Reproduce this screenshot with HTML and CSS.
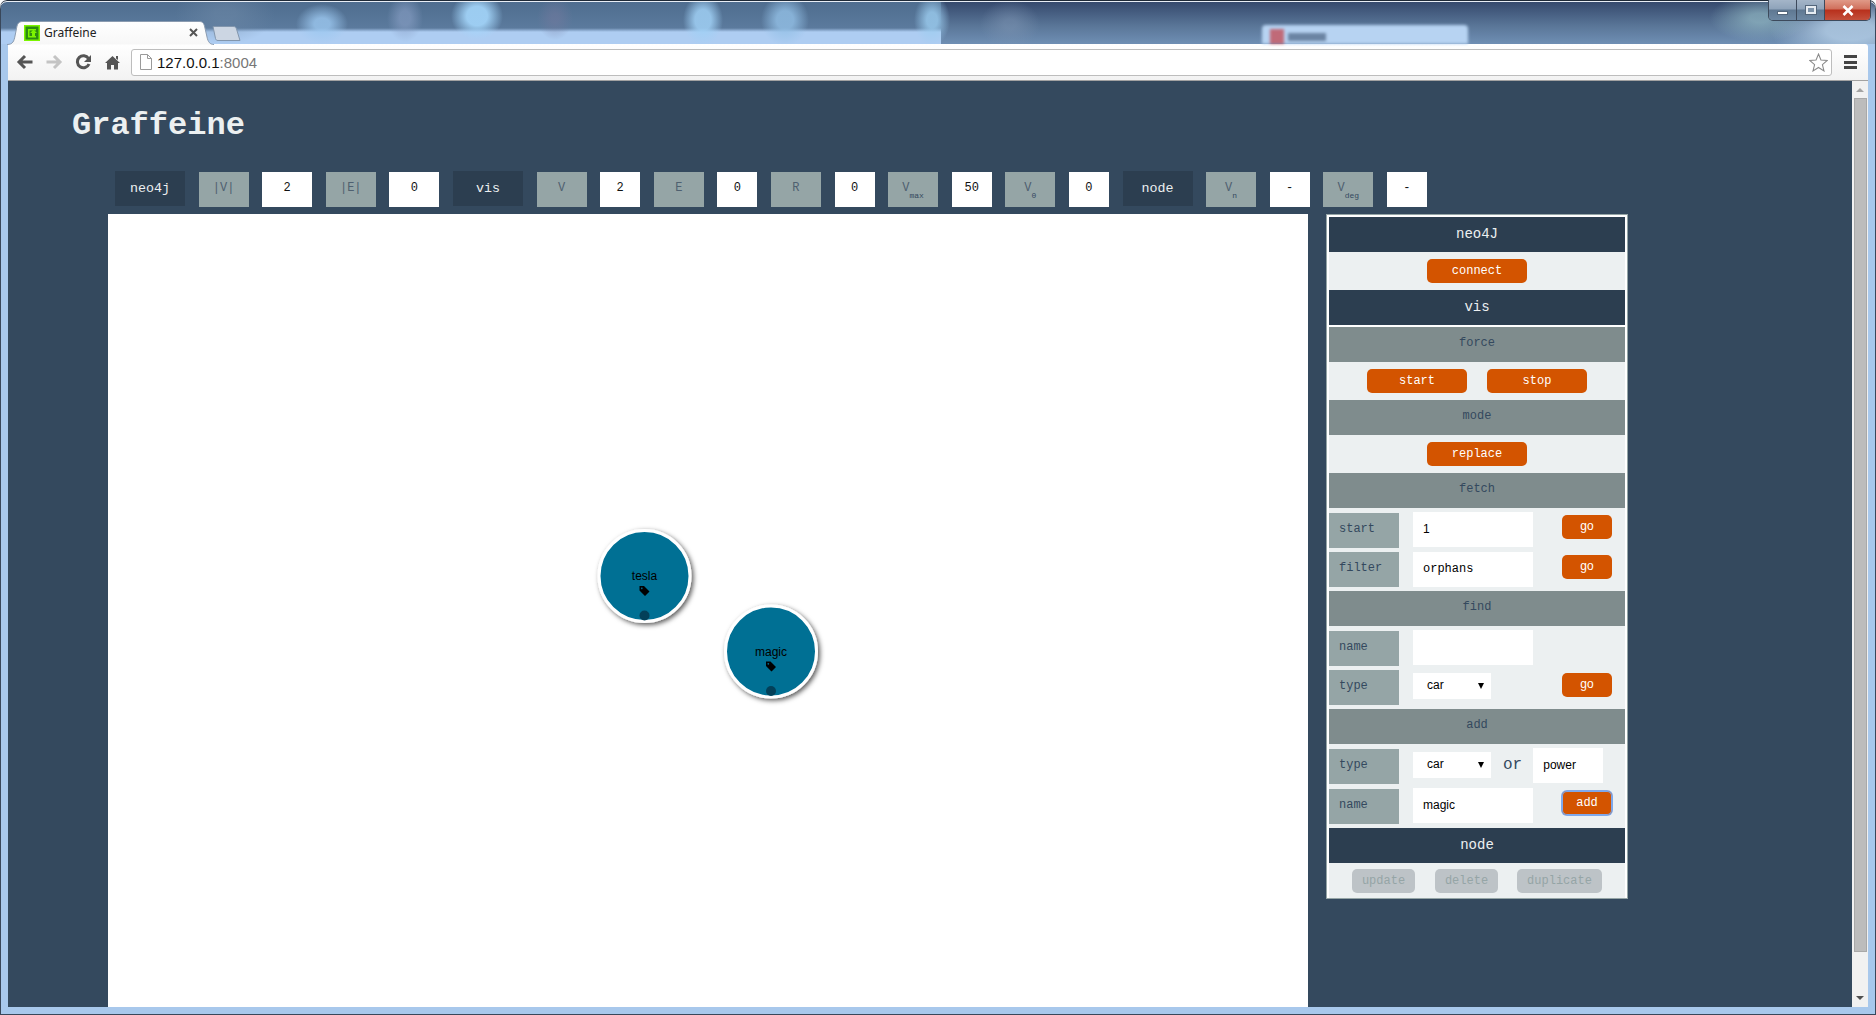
FILE: index.html
```html
<!DOCTYPE html>
<html>
<head>
  <title>Graffeine</title>
  <link rel="stylesheet" href="styles.css">
</head>
<body>
  <div class="window">
    <div class="glass-tab"><span class="glass-fav"></span><span class="glass-smudge"></span></div>
    <div class="tabstrip">
      <div class="tab">
        <svg class="tab-shape" width="208" height="24" viewBox="0 0 208 24">
          <path d="M0 23.5 C6 23.5 7 20 8 15 L10 5 C11 1.5 13 .5 16 .5 H192 C195 .5 196.5 1.5 197.5 5 L200 16 C201 21 203 23.5 207 23.5" fill="url(#tabFill)" stroke="#8a9bb0"/>
          <defs>
            <linearGradient id="tabFill" x1="0" y1="0" x2="0" y2="1">
              <stop offset="0" stop-color="#ffffff"/>
              <stop offset="1" stop-color="#f7f7f7"/>
            </linearGradient>
          </defs>
        </svg>
        <svg class="favicon" width="16" height="16" viewBox="0 0 16 16">
          <rect width="16" height="16" fill="#7cf500"/>
          <rect x="1.5" y="1.5" width="13" height="13" fill="#2d8a12"/>
          <path d="M4 4 H12 V5.5 H5.5 V11 H12 V12.5 H4 Z" fill="#7cf500"/>
          <path d="M9.5 4.5 L13 8 H11 V11 H8 V8 H6 Z" fill="#7cf500"/>
        </svg>
        <span class="tab-title">Graffeine</span>
        <svg class="tab-close" width="9" height="9" viewBox="0 0 9 9">
          <path d="M1 1 L8 8 M8 1 L1 8" stroke="#555" stroke-width="2"/>
        </svg>
      </div>
      <svg class="new-tab" width="32" height="17" viewBox="0 0 32 17">
        <path d="M1 1.5 H21 C23 1.5 24 2 24.5 4 L28 15.5 H6 C4.5 15.5 4 15 3.5 13.5 Z" fill="#ccd6e3" stroke="#8296ad"/>
      </svg>
      <div class="win-controls">
        <div class="win-btn">
          <span class="win-min"></span>
        </div>
        <div class="win-btn">
          <span class="win-max"></span>
        </div>
        <div class="win-btn win-close">
          <svg width="12" height="11" viewBox="0 0 12 11">
            <path d="M1.5 1 L10.5 10 M10.5 1 L1.5 10" stroke="#fff" stroke-width="2.6"/>
          </svg>
        </div>
      </div>
    </div>

    <div class="toolbar">
      <div class="tb-btn">
        <svg width="18" height="16" viewBox="0 0 18 16"><path d="M16.5 8 H4 M9 2 L3 8 L9 14" fill="none" stroke="#555" stroke-width="3"/></svg>
      </div>
      <div class="tb-btn">
        <svg width="18" height="16" viewBox="0 0 18 16"><path d="M1.5 8 H14 M9 2 L15 8 L9 14" fill="none" stroke="#c4c4c4" stroke-width="3"/></svg>
      </div>
      <div class="tb-btn">
        <svg width="17" height="16" viewBox="0 0 17 16"><path d="M13.5 4.5 A6 6 0 1 0 14 10" fill="none" stroke="#555" stroke-width="3"/><path d="M16 1 V8 H9 Z" fill="#555"/></svg>
      </div>
      <div class="tb-btn">
        <svg width="15" height="15" viewBox="0 0 15 15"><path d="M7.5 1 L15 8 H13 V14.5 H9 V10 H6 V14.5 H2 V8 H0 Z M11 1 H13 V5 L11 3.5 Z" fill="#555"/></svg>
      </div>
      <div class="omnibox">
        <svg class="doc-icon" width="12" height="16" viewBox="0 0 12 16"><path d="M.5 .5 H7.5 L11.5 4.5 V15.5 H.5 Z M7.5 .5 V4.5 H11.5" fill="#fff" stroke="#9a9a9a"/></svg>
        <span class="url">127.0.0.1<span class="url-port">:8004</span></span>
        <svg class="star" width="19" height="19" viewBox="0 0 18 18"><path d="M9 1 L11.3 6.7 L17.3 7.1 L12.7 11 L14.2 17 L9 13.7 L3.8 17 L5.3 11 L.7 7.1 L6.7 6.7 Z" fill="#fff" stroke="#8a8a8a"/></svg>
      </div>
      <div class="menu-btn"><span></span><span></span><span></span></div>
    </div>

    <div class="viewport">
      <div class="page">
        <h1 class="title">Graffeine</h1>

        <div class="stats">
          <div class="stat-head">neo4j</div>
          <div class="stat-key">|V|</div>
          <div class="stat-val">2</div>
          <div class="stat-key">|E|</div>
          <div class="stat-val">0</div>
          <div class="stat-head">vis</div>
          <div class="stat-key">V</div>
          <div class="stat-val stat-val-sm">2</div>
          <div class="stat-key">E</div>
          <div class="stat-val stat-val-sm">0</div>
          <div class="stat-key">R</div>
          <div class="stat-val stat-val-sm">0</div>
          <div class="stat-key">V<sub>max</sub></div>
          <div class="stat-val stat-val-sm">50</div>
          <div class="stat-key">V<sub>0</sub></div>
          <div class="stat-val stat-val-sm">0</div>
          <div class="stat-head">node</div>
          <div class="stat-key">V<sub>n</sub></div>
          <div class="stat-val stat-val-sm">-</div>
          <div class="stat-key">V<sub>deg</sub></div>
          <div class="stat-val stat-val-sm">-</div>
        </div>

        <div class="main">
          <div class="graph">
            <svg class="graph-svg" width="1200" height="793">
              <defs>
                <filter id="nodeShadow" x="-20%" y="-20%" width="150%" height="150%">
                  <feDropShadow dx="2" dy="2" stdDeviation="2.5" flood-color="#000" flood-opacity="0.65"/>
                </filter>
              </defs>
              <g class="node" transform="translate(536.5 362)">
                <circle r="45.5" class="node-disc" filter="url(#nodeShadow)"/>
                <text class="node-label" y="4">tesla</text>
                <path class="node-tag" transform="translate(0 15)" fill-rule="evenodd" d="M-5 -5 H-.5 L5 .5 L.5 5 L-5 -.5 Z M-2.7 -3.5 A.8 .8 0 1 0 -2.699 -3.5 Z"/>
                <circle class="node-dot" cy="39.5" r="5"/>
              </g>
              <g class="node" transform="translate(663 437.5)">
                <circle r="45.5" class="node-disc" filter="url(#nodeShadow)"/>
                <text class="node-label" y="4">magic</text>
                <path class="node-tag" transform="translate(0 15)" fill-rule="evenodd" d="M-5 -5 H-.5 L5 .5 L.5 5 L-5 -.5 Z M-2.7 -3.5 A.8 .8 0 1 0 -2.699 -3.5 Z"/>
                <circle class="node-dot" cy="39.5" r="5"/>
              </g>
            </svg>
          </div>

          <div class="panel">
            <div class="bar bar-dark">neo4J</div>
            <div class="btn-row">
              <button class="btn">connect</button>
            </div>
            <div class="bar bar-dark">vis</div>
            <div class="bar bar-grey bar-gap">force</div>
            <div class="btn-row">
              <button class="btn">start</button>
              <button class="btn">stop</button>
            </div>
            <div class="bar bar-grey">mode</div>
            <div class="btn-row">
              <button class="btn">replace</button>
            </div>
            <div class="bar bar-grey">fetch</div>
            <div class="form-group">
              <div class="form-row">
                <div class="form-label">start</div>
                <input class="field field-sans" type="text" value="1">
                <button class="btn btn-small btn-sans btn-up">go</button>
              </div>
              <div class="form-row">
                <div class="form-label">filter</div>
                <input class="field field-flush" type="text" value="orphans">
                <button class="btn btn-small btn-sans">go</button>
              </div>
            </div>
            <div class="bar bar-grey">find</div>
            <div class="form-group">
              <div class="form-row">
                <div class="form-label">name</div>
                <input class="field" type="text" value="">
              </div>
              <div class="form-row">
                <div class="form-label">type</div>
                <div class="select-box">car</div>
                <button class="btn btn-small btn-sans">go</button>
              </div>
            </div>
            <div class="bar bar-grey">add</div>
            <div class="form-group form-group-wide">
              <div class="form-row">
                <div class="form-label">type</div>
                <div class="select-box">car</div>
                <span class="or-word">or</span>
                <input class="field field-sans field-short" type="text" value="power">
              </div>
              <div class="form-row">
                <div class="form-label">name</div>
                <input class="field field-sans" type="text" value="magic">
                <button class="btn btn-small btn-up btn-focus">add</button>
              </div>
            </div>
            <div class="bar bar-dark">node</div>
            <div class="btn-row btn-row-node">
              <button class="btn btn-off btn-update">update</button>
              <button class="btn btn-off btn-update">delete</button>
              <button class="btn btn-off btn-dup">duplicate</button>
            </div>
          </div>
        </div>
      </div>

      <div class="scrollbar">
        <span class="arrow-up"></span>
        <div class="scroll-track">
          <div class="scroll-thumb"></div>
        </div>
        <span class="arrow-down"></span>
      </div>
    </div>
  </div>
</body>
</html>
```

FILE: styles.css
```css
html, body {
  margin: 0;
  height: 100%;
  overflow: hidden;
}
body {
  font-family: "Liberation Mono", "Courier New", monospace;
  background: #fff;
}
.window {
  position: relative;
  box-sizing: border-box;
  height: 1015px;
  padding: 0 8px 8px;
  display: flex;
  flex-direction: column;
  border-radius: 7px 7px 0 0;
  box-shadow: inset 0 1px 0 #1f2a38, inset 0 2px 0 #e8eef6, inset 1px 0 0 #39475a, inset -1px 0 0 #39475a, inset 0 -1px 0 #39475a;
  background-color: #a9c9ee;
  background-image:
    radial-gradient(ellipse 26px 20px at 322px 24px, rgba(156, 200, 240, .8) 30%, transparent),
    radial-gradient(ellipse 18px 24px at 405px 18px, rgba(138, 160, 198, .6) 30%, transparent),
    radial-gradient(ellipse 26px 24px at 477px 16px, rgba(164, 214, 251, .9) 40%, transparent),
    radial-gradient(ellipse 18px 22px at 555px 18px, rgba(116, 121, 158, .5) 20%, transparent),
    radial-gradient(ellipse 20px 26px at 703px 20px, rgba(160, 208, 245, .85) 40%, transparent),
    radial-gradient(ellipse 24px 26px at 785px 20px, rgba(147, 192, 230, .8) 35%, transparent),
    radial-gradient(ellipse 18px 26px at 932px 20px, rgba(156, 205, 240, .8) 30%, transparent),
    radial-gradient(ellipse 30px 24px at 1010px 24px, rgba(127, 150, 180, .5) 20%, transparent),
    radial-gradient(ellipse 50px 30px at 225px 14px, rgba(111, 138, 168, .5) 20%, transparent),
    radial-gradient(ellipse 50px 24px at 1760px 18px, rgba(156, 196, 204, .6) 20%, transparent),
    radial-gradient(ellipse 80px 34px at 1850px 30px, rgba(182, 208, 232, .8) 30%, transparent),
    linear-gradient(#4e6c8e 0, #5b7a9d 28px, #aecdf2 32px, #aecdf2 44px),
    linear-gradient(#33466a 0, #5a7698 26px, #6f8fb4 44px),
    linear-gradient(#a8c8ec, #a8c8ec);
  background-size: 100% 44px, 100% 44px, 100% 44px, 100% 44px, 100% 44px, 100% 44px, 100% 44px, 100% 44px, 100% 44px, 100% 44px, 100% 44px, 941px 44px, 100% 44px, 100% 100%;
  background-repeat: no-repeat;
}
.glass-tab {
  position: absolute;
  left: 1262px;
  top: 25px;
  width: 206px;
  height: 19px;
  display: flex;
  border-radius: 4px 4px 0 0;
  background: #b7d3f2;
  filter: blur(1.5px);
}
.glass-fav {
  width: 14px;
  height: 15px;
  margin: 4px 0 0 8px;
  background: #c06a78;
}
.glass-smudge {
  width: 38px;
  height: 8px;
  margin: 8px 0 0 4px;
  background: #6b84a3;
}

/* tab strip */
.tabstrip {
  position: relative;
  height: 44px;
  flex: none;
  display: flex;
  align-items: flex-start;
}
.tab {
  position: relative;
  width: 206px;
  height: 23px;
  margin-top: 21px;
  display: flex;
  align-items: center;
}
.tab-shape {
  position: absolute;
  left: -1px;
  top: 0;
}
.favicon {
  position: relative;
  margin-left: 16px;
  margin-top: 1px;
}
.tab-title {
  position: relative;
  margin-left: 4px;
  font: 12px "Noto Sans", "Liberation Sans", sans-serif;
  color: #222;
}
.tab-close {
  position: relative;
  margin-left: auto;
  margin-right: 16px;
}
.new-tab {
  margin-top: 25px;
  margin-left: -2px;
}
.win-controls {
  margin-left: auto;
  margin-right: -3px;
  height: 20px;
  display: flex;
  border: 1px solid #3d4a5c;
  border-top: none;
  border-radius: 0 0 5px 5px;
  overflow: hidden;
}
.win-btn {
  width: 27px;
  display: flex;
  align-items: center;
  justify-content: center;
  border-right: 1px solid #3d4a5c;
  background: linear-gradient(#a4b5c8 0, #8ea3ba 45%, #5f7892 50%, #6d88a3 100%);
}
.win-close {
  width: 45px;
  border-right: none;
  background: linear-gradient(#e09a88 0, #d0705c 45%, #b8301c 50%, #c4503c 100%);
}
.win-min {
  display: block;
  width: 11px;
  height: 4px;
  margin-top: 6px;
  background: #fff;
  border: 1px solid #53667b;
  box-sizing: border-box;
}
.win-max {
  display: block;
  width: 10px;
  height: 8px;
  border: 2px solid #e6ecf2;
  outline: 1px solid #53667b;
  box-sizing: border-box;
  background: #7d93a9;
}

/* browser toolbar */
.toolbar {
  flex: none;
  box-sizing: border-box;
  height: 37px;
  padding-left: 2.5px;
  display: flex;
  align-items: center;
  background: linear-gradient(#fff, #f2f2f2);
  border-bottom: 1px solid #a2a2a2;
  border-radius: 0 3px 0 0;
}
.tb-btn {
  width: 29px;
  display: flex;
  justify-content: center;
  align-items: center;
}
.omnibox {
  flex: 1;
  box-sizing: border-box;
  height: 27px;
  margin-left: 4.5px;
  padding: 0 3px 0 8px;
  display: flex;
  align-items: center;
  background: #fff;
  border: 1px solid #bdbdbd;
  border-radius: 3px;
}
.doc-icon {
  flex: none;
}
.url {
  margin-left: 5px;
  font: 15px "Liberation Sans", Arial, sans-serif;
  color: #111;
}
.url-port {
  color: #777;
}
.star {
  margin-left: auto;
}
.menu-btn {
  width: 36px;
  display: flex;
  flex-direction: column;
  align-items: center;
  gap: 2.5px;
}
.menu-btn span {
  width: 13px;
  height: 3px;
  background: #444;
}

/* page */
.viewport {
  flex: 1;
  min-height: 0;
  display: flex;
}
.page {
  flex: 1;
  min-width: 0;
  overflow: hidden;
  background: #34495e;
  display: flex;
  flex-direction: column;
}
.title {
  margin: 31px 0 31px 64px;
  font-size: 32px;
  line-height: 28px;
  font-weight: bold;
  color: #ecf0f1;
}
.stats {
  flex: none;
  height: 36px;
  margin-left: 107px;
  display: flex;
  align-items: flex-start;
  gap: 13.6px;
}
.stat-head {
  width: 70px;
  height: 35px;
  line-height: 35px;
  text-align: center;
  font-size: 13.33px;
  color: #ecf0f1;
  background: #2c3e50;
}
.stat-key, .stat-val {
  width: 50px;
  height: 35px;
  margin-top: 1px;
  line-height: 33px;
  text-align: center;
  font-size: 12px;
}
.stat-key {
  color: #4f6070;
  background: #95a5a6;
}
.stat-key sub {
  font-size: 8px;
  line-height: 0;
  vertical-align: -7px;
  color: #34495e;
}
.stat-val {
  color: #111;
  background: #fff;
}
.stat-val-sm {
  width: 40px;
}
.main {
  flex: 1;
  min-height: 0;
  margin: 7px 0 0 100px;
  display: flex;
  align-items: flex-start;
}
.graph {
  width: 1200px;
  height: 793px;
  background: #fff;
}
.graph-svg {
  display: block;
}
.node-disc {
  fill: #006f94;
  stroke: #fff;
  stroke-width: 3;
}
.node-label {
  font: 12px "Liberation Sans", Arial, sans-serif;
  text-anchor: middle;
  fill: #000;
}
.node-tag {
  fill: #000;
}
.node-dot {
  fill: #034059;
}

/* side panel */
.panel {
  box-sizing: border-box;
  width: 302px;
  margin-left: 18px;
  padding: 2px 2px 0;
  border: 1px solid #95a5a6;
  background: #fff;
}
.bar {
  height: 35px;
  line-height: 33px;
  text-align: center;
}
.bar-dark {
  line-height: 35px;
  font-size: 14px;
  color: #ecf0f1;
  background: #2c3e50;
}
.bar-grey {
  font-size: 12px;
  color: #34495e;
  background: #7f8c8d;
}
.bar-gap {
  margin-top: 2px;
}
.btn-row {
  height: 38px;
  display: flex;
  justify-content: center;
  align-items: center;
  gap: 20px;
  background: #ecf0f1;
}
.btn-row-node {
  height: 35px;
  justify-content: flex-start;
  padding-left: 23px;
}
.btn {
  width: 100px;
  height: 24px;
  padding: 0;
  border: none;
  border-radius: 5px;
  font: 12px "Liberation Mono", "Courier New", monospace;
  color: #fff;
  background: #d35400;
}
.btn-small {
  width: 50px;
  flex: none;
  margin-top: 3px;
  margin-left: auto;
  margin-right: 13px;
}
.btn-sans {
  padding-bottom: 2px;
  font-family: "Liberation Sans", Arial, sans-serif;
}
.btn-up {
  margin-top: 2px;
}
.btn-focus {
  box-shadow: inset 0 0 0 1px #7fa8ea, 0 0 0 1px #7fa8ea;
}
.btn-off {
  color: #95a5a6;
  background: #bdc3c7;
}
.btn-update {
  width: 63px;
}
.btn-dup {
  width: 85px;
  margin-left: -1px;
}
.form-group {
  padding: 5px 0 4px;
  display: flex;
  flex-direction: column;
  gap: 4px;
  background: #ecf0f1;
}
.form-group-wide {
  gap: 5px;
}
.form-row {
  height: 35px;
  display: flex;
  align-items: flex-start;
}
.form-label {
  flex: none;
  box-sizing: border-box;
  width: 70px;
  height: 35px;
  padding-left: 10px;
  line-height: 33px;
  font-size: 12px;
  color: #34495e;
  background: #95a5a6;
}
.field {
  flex: none;
  box-sizing: border-box;
  width: 120px;
  height: 35px;
  margin: -1px 0 0 14px;
  padding: 0 10px 2px;
  border: none;
  font: 12px "Liberation Mono", "Courier New", monospace;
  color: #000;
  background: #fff;
}
.field-sans {
  font-family: "Liberation Sans", Arial, sans-serif;
}
.field-flush {
  margin-top: 0;
}
.field-short {
  width: 70px;
  margin-left: 11px;
}
.select-box {
  position: relative;
  flex: none;
  box-sizing: border-box;
  width: 78px;
  height: 26px;
  margin: 3px 0 0 14px;
  padding-left: 14px;
  font: 12px/25px "Liberation Sans", Arial, sans-serif;
  color: #000;
  background: #fff;
}
.select-box::after {
  content: "";
  position: absolute;
  right: 7px;
  top: 10px;
  border-left: 3.5px solid transparent;
  border-right: 3.5px solid transparent;
  border-top: 6px solid #000;
}
.or-word {
  margin-left: 12px;
  font-size: 16px;
  line-height: 32px;
  color: #34495e;
}

/* scrollbar */
.scrollbar {
  flex: none;
  width: 16px;
  display: flex;
  flex-direction: column;
  align-items: center;
  background: #f1f1f1;
}
.arrow-up, .arrow-down {
  flex: none;
  width: 0;
  height: 0;
  border-left: 4px solid transparent;
  border-right: 4px solid transparent;
}
.arrow-up {
  margin-top: 7px;
  border-bottom: 4px solid #a3a3a3;
}
.arrow-down {
  margin-bottom: 7px;
  border-top: 4px solid #505050;
}
.scroll-track {
  flex: 1;
  width: 100%;
  display: flex;
  justify-content: center;
  padding: 6px 0;
}
.scroll-thumb {
  box-sizing: border-box;
  width: 13px;
  height: 854px;
  background: #bcbcbc;
  border: 1px solid #a8a8a8;
}
```
